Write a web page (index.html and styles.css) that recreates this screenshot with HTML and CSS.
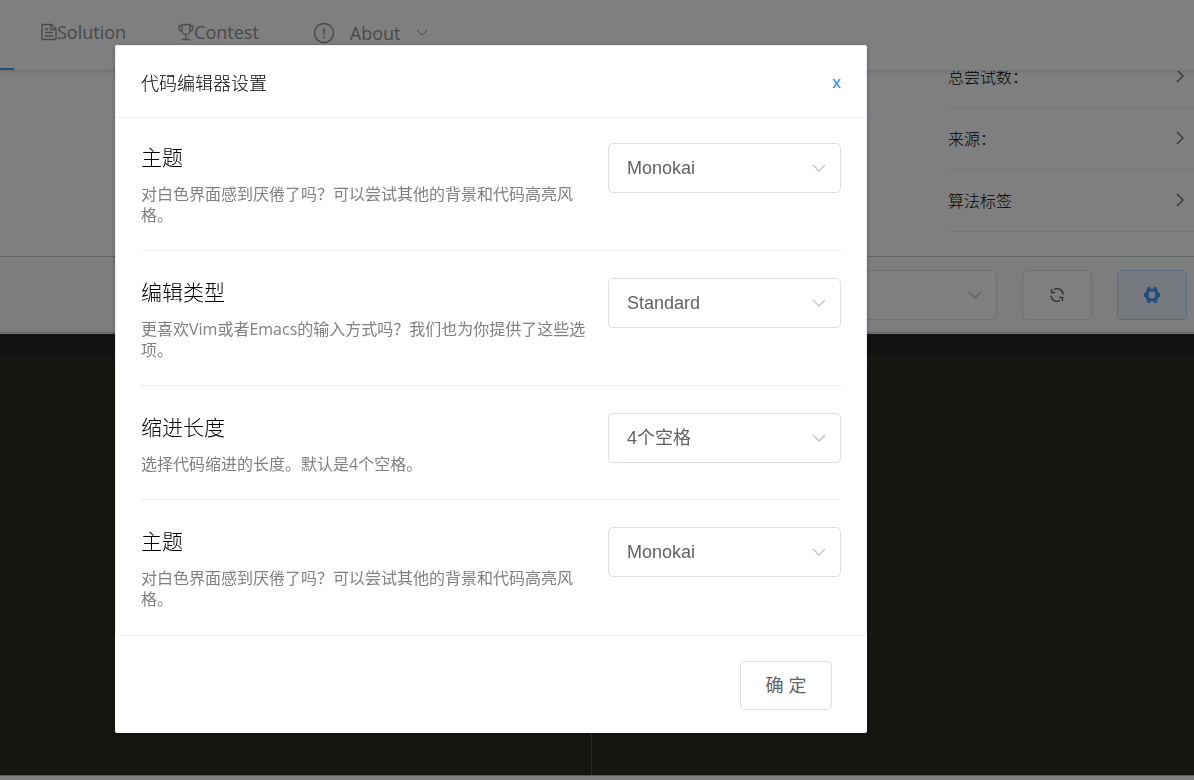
FILE: index.html
```html
<!DOCTYPE html>
<html lang="zh-CN">
<head>
<meta charset="utf-8">
<meta name="viewport" content="width=device-width, initial-scale=1">
<title>代码编辑器设置</title>
<link rel="stylesheet" href="styles.css">
</head>
<body>
<div class="page">
  <header class="header">
    <nav class="nav">
      <span class="nav-active"></span>
      <a class="nav-item" href="#">
        <svg class="nav-icon" viewBox="0 0 16 18"><path d="M1 1.500h9.500L15 6v10.500H1zM10 1.500V6.500h5M4 6h3.500M4 9.500h8M4 13h8"/></svg>Solution</a>
      <a class="nav-item" href="#">
        <svg class="nav-icon" viewBox="0 0 16 18"><path d="M4 1.500h8v6a4 4 0 0 1-8 0zM4 3H1v2a3 3 0 0 0 3 3M12 3h3v2a3 3 0 0 1-3 3M8 11.500v5M4 16.500h8"/></svg>Contest</a>
      <a class="nav-item nav-about" href="#">
        <svg class="about-icon" viewBox="0 0 22 22"><circle cx="11" cy="11" r="9.500"/><path d="M11 6v6.500M11 14.500v2"/></svg>
        About
        <svg class="about-arrow" viewBox="0 0 12 8"><path d="M1 1l5 5 5-5"/></svg></a>
    </nav>
  </header>
  <section class="details">
    <ul class="info-list">
      <li class="info-row"><span>总尝试数：</span><svg class="chevron" viewBox="0 0 8 14"><path d="M1 1l6 6-6 6"/></svg></li>
      <li class="info-row"><span>来源：</span><svg class="chevron" viewBox="0 0 8 14"><path d="M1 1l6 6-6 6"/></svg></li>
      <li class="info-row"><span>算法标签</span><svg class="chevron" viewBox="0 0 8 14"><path d="M1 1l6 6-6 6"/></svg></li>
    </ul>
  </section>
  <section class="toolbar">
    <div class="select-wrap">
      <select class="select" aria-label="语言"><option></option></select>
      <svg class="select-arrow" viewBox="0 0 14 8"><path d="M1 1l6 6 6-6"/></svg>
    </div>
    <button class="tool-button" type="button" aria-label="刷新">
      <svg class="refresh-icon" viewBox="0 0 14 14"><path d="M4 1.500A6 6 0 0 1 13 6.500M1.500 1v3.500H5M10 12.500A6 6 0 0 1 1 7.500M12.500 13V9.500H9"/></svg>
    </button>
    <button class="tool-button tool-primary" type="button" aria-label="设置">
      <svg class="gear-icon" viewBox="0 0 16 16"><path fill-rule="evenodd" d="M3.500 0h2.500l1 1.800h2L10 0h2.500l.8 3 1 2.300L16 6.500v3l-1.700 1.200-1 2.300-.8 3H10l-1-1.800H7L6 16H3.500l-.8-3-1-2.300L0 9.500v-3l1.700-1.200 1-2.300zM8 4.600a3.400 3.400 0 1 0 0 6.800 3.400 3.400 0 0 0 0-6.800z"/></svg>
    </button>
  </section>
  <main class="editor">
    <div class="editor-bar"></div>
    <div class="editor-panes"><div class="pane"></div><div class="pane"></div></div>
  </main>
</div>

<div class="overlay">
  <div class="dialog" role="dialog" aria-modal="true" aria-labelledby="dialog-title">
    <div class="card">
      <div class="card-header">
        <h2 class="dialog-title" id="dialog-title">代码编辑器设置</h2>
        <button class="close" type="button">x</button>
      </div>
      <div class="card-body">
        <div class="setting">
          <div class="setting-text">
            <label class="setting-name" for="theme">主题</label>
            <p class="setting-desc">对白色界面感到厌倦了吗？可以尝试其他的背景和代码高亮风格。</p>
          </div>
          <div class="select-wrap">
            <select class="select" id="theme"><option>Monokai</option></select>
            <svg class="select-arrow" viewBox="0 0 14 8"><path d="M1 1l6 6 6-6"/></svg>
          </div>
        </div>
        <div class="setting">
          <div class="setting-text">
            <label class="setting-name" for="keymap">编辑类型</label>
            <p class="setting-desc">更喜欢Vim或者Emacs的输入方式吗？我们也为你提供了这些选项。</p>
          </div>
          <div class="select-wrap">
            <select class="select" id="keymap"><option>Standard</option></select>
            <svg class="select-arrow" viewBox="0 0 14 8"><path d="M1 1l6 6 6-6"/></svg>
          </div>
        </div>
        <div class="setting">
          <div class="setting-text">
            <label class="setting-name" for="indent">缩进长度</label>
            <p class="setting-desc">选择代码缩进的长度。默认是4个空格。</p>
          </div>
          <div class="select-wrap">
            <select class="select" id="indent"><option>4个空格</option></select>
            <svg class="select-arrow" viewBox="0 0 14 8"><path d="M1 1l6 6 6-6"/></svg>
          </div>
        </div>
        <div class="setting">
          <div class="setting-text">
            <label class="setting-name" for="theme-alt">主题</label>
            <p class="setting-desc">对白色界面感到厌倦了吗？可以尝试其他的背景和代码高亮风格。</p>
          </div>
          <div class="select-wrap">
            <select class="select" id="theme-alt"><option>Monokai</option></select>
            <svg class="select-arrow" viewBox="0 0 14 8"><path d="M1 1l6 6 6-6"/></svg>
          </div>
        </div>
      </div>
    </div>
    <div class="dialog-footer">
      <button class="confirm" type="button">确 定</button>
    </div>
  </div>
</div>
</body>
</html>
```
FILE: styles.css
```css
* {
  box-sizing: border-box;
}

body {
  margin: 0;
  font-family: "Open Sans", "Noto Sans CJK SC", sans-serif;
  font-size: 16px;
  color: #303133;
}

svg {
  flex: none;
  fill: none;
  stroke: currentColor;
}

button,
select {
  font-family: "Liberation Sans", "Noto Sans CJK SC", sans-serif;
}

.page {
  display: flex;
  flex-direction: column;
  height: 100vh;
  padding-bottom: 4px;
  overflow: hidden;
  background: #fff;
}

.header {
  flex: none;
  position: relative;
  height: 71px;
  border-bottom: 1px solid #e4e4e6;
  background: #fff;
  box-shadow: 0 1px 4px rgba(0, 0, 0, 0.12);
}

.nav {
  display: flex;
  height: 70px;
}

.nav-active {
  width: 14px;
  border-bottom: 2px solid #409eff;
}

.nav-item {
  display: flex;
  align-items: center;
  padding: 0 25px 6px 27px;
  font-size: 18px;
  color: #909399;
  text-decoration: none;
}

.nav-icon {
  width: 16px;
  height: 18px;
  stroke-width: 1.3;
}

.nav-about {
  gap: 15px;
  margin-left: 2px;
  padding-bottom: 4px;
}

.about-icon {
  width: 22px;
  height: 22px;
  stroke-width: 1.5;
}

.about-arrow {
  width: 12px;
  height: 8px;
}

.details {
  display: flex;
  flex: none;
  justify-content: flex-end;
  align-items: flex-end;
  height: 185px;
  padding-bottom: 24px;
  overflow: hidden;
}

.info-list {
  width: 246px;
  margin: 0;
  padding: 0;
  list-style: none;
}

.info-row {
  display: flex;
  justify-content: space-between;
  align-items: center;
  height: 62px;
  padding: 0 10px 2px 0;
  border-bottom: 1px solid #ebeef5;
  font-weight: 300;
  color: #000;
}

.chevron {
  width: 8px;
  height: 14px;
  color: #606266;
  stroke-width: 1.3;
}

.toolbar {
  display: flex;
  flex: none;
  justify-content: flex-end;
  gap: 25px;
  height: 77px;
  padding: 13px 7px;
  border-top: 1px solid #c6cad0;
  border-bottom: 1px solid #c6cad0;
  background: #f8fcfa;
}

.tool-button {
  display: flex;
  justify-content: center;
  align-items: center;
  width: 70px;
  height: 50px;
  border: 1px solid #dcdfe6;
  border-radius: 5px;
  background: #fff;
  color: #606266;
}

.tool-primary {
  border-color: #b3d8ff;
  background: #ecf5ff;
  color: #409eff;
}

.refresh-icon {
  width: 14px;
  height: 14px;
  stroke-width: 1.4;
}

.gear-icon {
  width: 16px;
  height: 16px;
  fill: currentColor;
  stroke: none;
}

.editor {
  display: flex;
  flex: 1;
  flex-direction: column;
  border-top: 1px solid #e8e8e8;
  border-bottom: 1px solid #b4b4b4;
  background: #2a2b22;
}

.editor-bar {
  height: 21px;
  background: #222;
}

.editor-panes {
  display: grid;
  flex: 1;
  grid-template-columns: 592px 1fr;
}

.pane:first-child {
  border-right: 1px solid #555;
}

.overlay {
  position: fixed;
  inset: 0;
  padding: 45px 327px 45px 115px;
  overflow: auto;
  background: rgba(0, 0, 0, 0.5);
}

.dialog {
  border-radius: 2px;
  background: #fff;
  box-shadow: 0 1px 4px rgba(0, 0, 0, 0.3);
}

.card {
  border: 1px solid #ebeef5;
  border-radius: 5px;
}

.card-header {
  display: flex;
  justify-content: space-between;
  align-items: center;
  height: 72px;
  padding: 0 25px;
  border-bottom: 1px solid #ebeef5;
}

.dialog-title {
  margin: 0;
  font-size: 18px;
  font-weight: 300;
  color: #000;
}

.close {
  padding: 0;
  border: 0;
  background: none;
  font-family: "Open Sans", sans-serif;
  font-size: 16px;
  font-weight: 600;
  color: #409eff;
}

.card-body {
  padding: 0 25px 1px;
}

.setting {
  display: flex;
  justify-content: space-between;
  padding: 27px 0 24px;
}

.setting:first-child {
  padding-top: 25px;
}

.setting + .setting {
  border-top: 1px solid #ebeef5;
}

.setting-text {
  flex: 1;
  padding-right: 12px;
}

.setting-name {
  display: block;
  margin-bottom: 12px;
  font-size: 21px;
  font-weight: 300;
  line-height: 29px;
  color: #000;
}

.setting-desc {
  margin: 0;
  line-height: 21px;
  color: #808080;
}

.select-wrap {
  flex: none;
  display: grid;
  align-items: center;
  width: 233px;
  height: 50px;
}

.select {
  grid-area: 1 / 1;
  width: 100%;
  height: 100%;
  padding: 0 18px;
  border: 1px solid #dcdfe6;
  border-radius: 5px;
  appearance: none;
  background: #fff;
  font-size: 18px;
  color: #606266;
}

.select-arrow {
  grid-area: 1 / 1;
  justify-self: end;
  width: 14px;
  height: 8px;
  margin-right: 15px;
  color: #c0c4cc;
  stroke-width: 1.3;
  pointer-events: none;
}

.dialog-footer {
  display: flex;
  justify-content: flex-end;
  padding: 25px 35px 23px;
}

.confirm {
  width: 92px;
  height: 49px;
  padding-bottom: 4px;
  border: 1px solid #dcdfe6;
  border-radius: 5px;
  background: #fff;
  font-size: 18px;
  color: #606266;
}
```
